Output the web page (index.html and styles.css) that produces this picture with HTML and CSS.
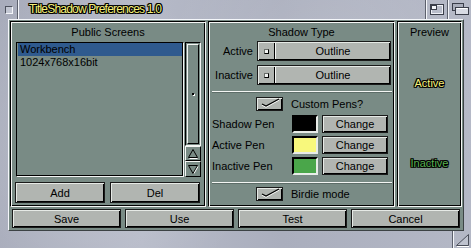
FILE: index.html
```html
<!DOCTYPE html>
<html>
<head>
<meta charset="utf-8">
<link rel="stylesheet" href="styles.css">
</head>
<body>
<div class="window">
  <div class="titlebar">
    <div class="gad close"><span class="closebox"></span></div>
    <div class="title">TitleShadow Preferences 1.0</div>
    <div class="gad zoom">
      <svg width="21" height="19" viewBox="0 0 21 19">
        <rect x="4.5" y="4.5" width="13" height="10" fill="#b9bdca" stroke="#3a3e4a"/>
        <rect x="5.5" y="5.5" width="11" height="8" fill="none" stroke="#eef0f6"/>
        <rect x="5.5" y="5.5" width="5" height="4" fill="#f4f6fa" stroke="#3a3e4a"/>
      </svg>
    </div>
    <div class="gad depth">
      <svg width="23" height="19" viewBox="0 0 23 19">
        <rect x="4.5" y="3.5" width="11" height="7" fill="#a9adba" stroke="#3a3e4a"/>
        <rect x="7.5" y="7.5" width="13" height="7" fill="#d8dbe4" stroke="#3a3e4a"/>
        <line x1="8.5" y1="8.5" x2="19.5" y2="8.5" stroke="#fff"/>
      </svg>
    </div>
  </div>
  <div class="middle">
    <div class="lborder"></div>
    <div class="inner">
      <div class="panels">
        <section class="panel screens">
          <div class="ptitle">Public Screens</div>
          <div class="listrow">
            <div class="list">
              <div class="item sel">Workbench</div>
              <div class="item">1024x768x16bit</div>
            </div>
            <div class="scroll">
              <div class="track"><div class="knob"><span class="grip"></span></div></div>
              <div class="arrow">
                <svg width="14" height="13" viewBox="0 0 14 13"><polygon points="7,2.5 11.5,10.5 2.5,10.5" fill="none" stroke="#000"/><line x1="3.5" y1="11.5" x2="11.5" y2="11.5" stroke="#fff"/></svg>
              </div>
              <div class="arrow">
                <svg width="14" height="13" viewBox="0 0 14 13"><polygon points="2.5,2.5 11.5,2.5 7,10.5" fill="none" stroke="#000"/><line x1="8" y1="10.5" x2="12" y2="3.5" stroke="#fff"/></svg>
              </div>
            </div>
          </div>
          <div class="btnrow">
            <div class="btn">Add</div>
            <div class="btn">Del</div>
          </div>
        </section>

        <section class="panel shadow">
          <div class="ptitle short">Shadow Type</div>
          <div class="cyclegrid">
            <div class="clabel">Active</div>
            <div class="cycle"><span class="ico"></span><span class="sep"></span><span class="val">Outline</span></div>
            <div class="clabel">Inactive</div>
            <div class="cycle"><span class="ico"></span><span class="sep"></span><span class="val">Outline</span></div>
          </div>
          <div class="hr first"></div>
          <div class="checkrow custom">
            <div class="check">
              <svg width="25" height="12" viewBox="0 0 25 12"><polyline points="5,7 9,9 22,2" fill="none" stroke="#fff" stroke-width="1.3"/><polyline points="5,6 9,8 22,1" fill="none" stroke="#000" stroke-width="1.3"/></svg>
            </div>
            <span>Custom Pens?</span>
          </div>
          <div class="pens">
            <div class="plabel">Shadow Pen</div>
            <div class="swatch" style="background:#000000"></div>
            <div class="btn">Change</div>
            <div class="plabel">Active Pen</div>
            <div class="swatch" style="background:#f8f87c"></div>
            <div class="btn">Change</div>
            <div class="plabel">Inactive Pen</div>
            <div class="swatch" style="background:#4aa64a"></div>
            <div class="btn">Change</div>
          </div>
          <div class="hr second"></div>
          <div class="checkrow birdie">
            <div class="check">
              <svg width="25" height="12" viewBox="0 0 25 12"><polyline points="5,7 9,9 22,2" fill="none" stroke="#fff" stroke-width="1.3"/><polyline points="5,6 9,8 22,1" fill="none" stroke="#000" stroke-width="1.3"/></svg>
            </div>
            <span>Birdie mode</span>
          </div>
        </section>

        <section class="panel preview">
          <div class="ptitle">Preview</div>
          <div class="pv active">Active</div>
          <div class="pv inactive">Inactive</div>
        </section>
      </div>
      <div class="actions">
        <div class="btn">Save</div>
        <div class="btn">Use</div>
        <div class="btn">Test</div>
        <div class="btn">Cancel</div>
      </div>
    </div>
    <div class="rborder"></div>
  </div>
  <div class="bottom">
    <div class="sizegad">
      <svg width="18" height="17" viewBox="0 0 18 17">
        <polygon points="3.5,14.5 15.5,3.5 15.5,14.5" fill="#bfc3cf" stroke="#4a4e5a"/>
        <line x1="4" y1="15.5" x2="16" y2="15.5" stroke="#fff"/>
      </svg>
    </div>
  </div>
</div>
</body>
</html>
```

FILE: styles.css
```css
* { box-sizing: border-box; }

html, body {
  margin: 0;
  padding: 0;
}

body {
  background: #aeb2c1;
  font-family: "Liberation Sans", Arial, sans-serif;
  font-size: 11px;
  color: #000;
}

.window {
  width: 471px;
  height: 248px;
  display: flex;
  flex-direction: column;
  background:
    radial-gradient(circle at 20% 60%, rgba(255,255,255,0.18), transparent 40%),
    radial-gradient(circle at 70% 30%, rgba(255,255,255,0.14), transparent 45%),
    linear-gradient(90deg, #a8acbb, #b6bac8 30%, #aaaebd 60%, #b4b8c6);
  overflow: hidden;
}

/* ---------- title bar ---------- */
.titlebar {
  height: 19px;
  display: flex;
  flex: none;
}

.gad {
  display: flex;
  align-items: center;
  justify-content: center;
  flex: none;
}

.gad.close {
  width: 18px;
  border-right: 1px solid #5c606c;
}

.closebox {
  width: 8px;
  height: 8px;
  border: 1px solid;
  border-color: #4e525e #f4f6fa #f4f6fa #4e525e;
  background: #c2c6d2;
}

.title {
  flex: 1;
  box-shadow: inset 1px 0 #f4f6fa;
  padding-left: 11px;
  line-height: 18px;
  font-size: 12px;
  letter-spacing: -0.8px;
  color: #f6f27a;
  text-shadow:
    1px 0 #000, -1px 0 #000, 0 1px #000, 0 -1px #000,
    1px 1px #000, -1px -1px #000, 1px -1px #000, -1px 1px #000;
  white-space: nowrap;
}

.gad.zoom {
  width: 22px;
  border-left: 1px solid #5c606c;
  box-shadow: inset 1px 0 #f4f6fa;
}

.gad.depth {
  width: 24px;
  border-left: 1px solid #5c606c;
  box-shadow: inset 1px 0 #f4f6fa;
}

/* ---------- middle ---------- */
.middle {
  display: flex;
  height: 212px;
  flex: none;
}

.lborder {
  width: 8px;
  flex: none;
}

.rborder {
  width: 7px;
  flex: none;
}

.inner {
  width: 456px;
  flex: none;
  border: 1px solid;
  border-color: #f4f6fa #3c4244 #3c4244 #f4f6fa;
  background: #798b85;
  display: flex;
  flex-direction: column;
  gap: 2px;
  padding: 1px 1px 2px 1px;
}

.panels {
  display: flex;
  gap: 2px;
  height: 186px;
  flex: none;
}

.panel {
  height: 186px;
  border: 1px solid;
  border-color: #000 #f4f6f4 #f4f6f4 #000;
  box-shadow: inset 1px 1px #f4f6f4, inset -1px -1px #000;
  display: flex;
  flex-direction: column;
  flex: none;
}

.panel.screens { width: 196px; }
.panel.shadow { width: 187px; }
.panel.preview { width: 65px; }

.ptitle {
  height: 20px;
  line-height: 21px;
  text-align: center;
  flex: none;
}

.ptitle.short {
  height: 19px;
}

/* ---------- list ---------- */
.listrow {
  display: flex;
  gap: 1px;
  height: 135px;
  margin: 0 4px 0 5px;
  flex: none;
}

.list {
  flex: 1;
  border: 1px solid;
  border-color: #000 #f4f6f4 #f4f6f4 #000;
  box-shadow: inset -1px -1px #000;
  padding: 0 1px;
}

.item {
  height: 13px;
  line-height: 13px;
  padding-left: 2px;
  white-space: nowrap;
}

.item.sel {
  background: #2f5a8e;
}

.scroll {
  width: 16px;
  flex: none;
  display: flex;
  flex-direction: column;
}

.track {
  height: 104px;
  border: 1px solid;
  border-color: #000 #f4f6f4 #f4f6f4 #000;
  padding: 1px;
  flex: none;
}

.knob {
  height: 100%;
  border: 1px solid;
  border-color: #f4f6f4 #000 #000 #f4f6f4;
  display: flex;
  align-items: center;
  justify-content: center;
}

.grip {
  width: 2px;
  height: 2px;
  background: #000;
  box-shadow: 1px 1px #fff;
}

.arrow {
  height: 15px;
  border: 1px solid;
  border-color: #f4f6f4 #000 #000 #f4f6f4;
  display: flex;
  align-items: center;
  justify-content: center;
  flex: none;
}

.arrow + .arrow {
  height: 16px;
}

/* ---------- buttons ---------- */
.btn {
  background: #b1b5b1;
  border: 1px solid #1a1a1a;
  box-shadow: inset 1px 1px #e6eae6, inset -1px -1px #000;
  display: flex;
  align-items: center;
  justify-content: center;
  white-space: nowrap;
}

.btnrow {
  display: flex;
  gap: 5px;
  height: 21px;
  margin-top: 5px;
  padding: 0 5px 0 4px;
  flex: none;
}

.btnrow .btn { flex: 1; }

.actions {
  display: flex;
  gap: 4px;
  height: 19px;
  padding: 0 2px;
  flex: none;
}

.actions .btn { flex: 1; }

/* ---------- shadow type ---------- */
.cyclegrid {
  display: grid;
  grid-template-columns: 41px 134px;
  grid-auto-rows: 20px;
  column-gap: 4px;
  row-gap: 4px;
  padding-left: 3px;
  flex: none;
}

.clabel {
  text-align: right;
  line-height: 20px;
}

.cycle {
  background: #b1b5b1;
  border: 1px solid #1a1a1a;
  box-shadow: inset 1px 1px #e6eae6, inset -1px -1px #000;
  display: flex;
  align-items: center;
}

.cycle .ico {
  width: 5px;
  height: 5px;
  margin-left: 6px;
  background: #f4f6f4;
  border: 1px solid;
  border-color: #6a6e6a #000 #000 #6a6e6a;
  flex: none;
}

.cycle .sep {
  width: 2px;
  height: 16px;
  margin-left: 5px;
  border-left: 1px solid #000;
  border-right: 1px solid #f4f6f4;
  flex: none;
}

.cycle .val {
  flex: 1;
  text-align: center;
}

.hr {
  height: 2px;
  margin: 0 2px 0 3px;
  border-top: 1px solid #f4f6f4;
  border-bottom: 1px solid #5d6d68;
  flex: none;
}

.hr.first { margin-top: 6px; }
.hr.second { margin-top: 7px; }

.checkrow {
  display: flex;
  align-items: center;
  gap: 8px;
  height: 14px;
  padding-left: 47px;
  flex: none;
}

.checkrow.custom { margin-top: 4px; }
.checkrow.birdie { margin-top: 3px; }

.check {
  width: 27px;
  height: 14px;
  background: #b1b5b1;
  border: 1px solid #1a1a1a;
  box-shadow: inset 1px 1px #e6eae6, inset -1px -1px #000;
  display: flex;
  align-items: center;
  justify-content: center;
  flex: none;
}

.pens {
  display: grid;
  grid-template-columns: 80px 26px 70px;
  grid-auto-rows: 18px;
  row-gap: 3px;
  column-gap: 0;
  margin-top: 4px;
  padding-left: 3px;
  flex: none;
}

.pens .btn { margin-left: 4px; }

.plabel {
  line-height: 18px;
  white-space: nowrap;
}

.swatch {
  border: 2px solid;
  border-color: #000 #e8ece8 #e8ece8 #000;
}

/* ---------- preview ---------- */
.pv {
  text-align: center;
  height: 13px;
  line-height: 13px;
  flex: none;
  text-shadow:
    1px 0 #000, -1px 0 #000, 0 1px #000, 0 -1px #000,
    1px 1px #000, -1px -1px #000, 1px -1px #000, -1px 1px #000;
}

.pv.active {
  margin-top: 35px;
  color: #f8f47c;
}

.pv.inactive {
  margin-top: 67px;
  color: #58b050;
}

/* ---------- bottom border ---------- */
.bottom {
  height: 17px;
  flex: none;
  display: flex;
  justify-content: flex-end;
}

.sizegad {
  width: 19px;
  border-left: 1px solid #5c606c;
  box-shadow: inset 1px 0 #f4f6fa;
  display: flex;
  align-items: center;
  justify-content: center;
}
```
